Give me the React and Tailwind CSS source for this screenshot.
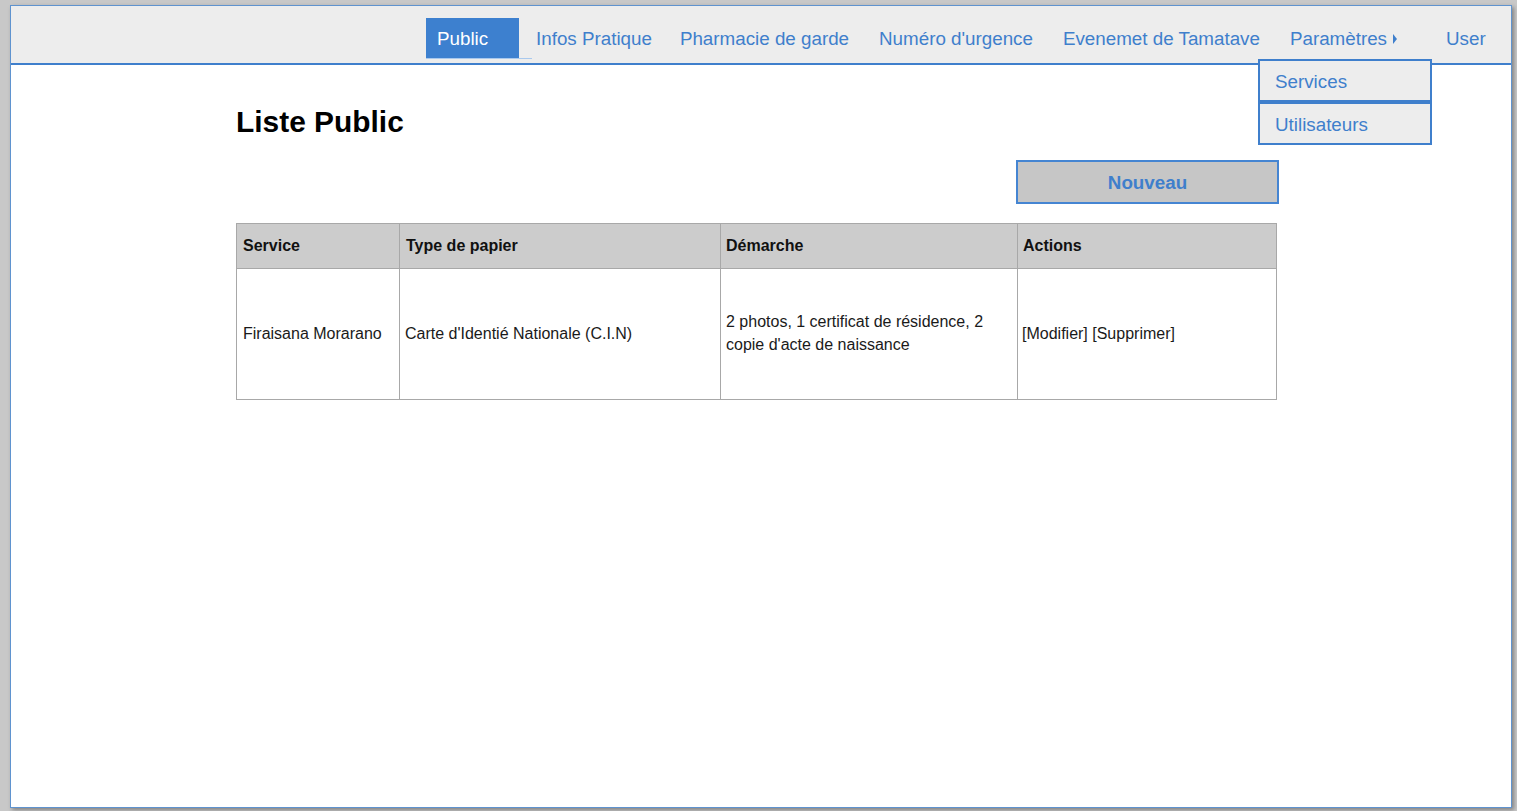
import React from "react";

const navFont = { fontFamily: '"Liberation Sans", Arial, sans-serif' };

export default function App() {
  return (
    <div className="w-[1517px] h-[811px] bg-[#c8c8c8] pt-[5px] pl-[10px] overflow-hidden" style={navFont}>
      <div className="relative w-[1502px] h-[803px] bg-white border border-[#5f93cf] shadow-[2px_2px_4px_rgba(0,0,0,0.35)]">
        {/* Navbar */}
        <div className="h-[59px] bg-[#ededed] border-b-2 border-[#3f7fcc] flex items-start pl-[415px] text-[18.8px] text-[#3f7fcc]">
          <div className="mt-[12px] w-[106px] h-[41px] border-b border-[#a9c9ee]">
            <div className="w-[93px] h-[40px] bg-[#3d80cf] text-white flex items-center pl-[11px] pt-[3px]">Public</div>
          </div>
          <div className="ml-[4px] mt-[12px] h-[40px] flex items-center pt-[3px]">Infos Pratique</div>
          <div className="ml-[28px] mt-[12px] h-[40px] flex items-center pt-[3px]">Pharmacie de garde</div>
          <div className="ml-[30px] mt-[12px] h-[40px] flex items-center pt-[3px]">Numéro d'urgence</div>
          <div className="ml-[30px] mt-[12px] h-[40px] flex items-center pt-[3px]">Evenemet de Tamatave</div>
          <div className="ml-[30px] mt-[12px] h-[40px] flex items-center pt-[3px]">
            Paramètres
            <svg width="4" height="10" viewBox="0 0 4 10" className="ml-[6px] -mt-[2px]">
              <polygon points="0,0 4,5 0,10" fill="#3f7fcc" />
            </svg>
          </div>
          <div className="ml-[49px] mt-[12px] h-[40px] flex items-center pt-[3px]">User</div>
        </div>

        {/* Dropdown */}
        <div className="absolute left-[1247px] top-[53px] w-[174px] text-[18.8px] text-[#3f7fcc]">
          <div className="h-[43px] bg-[#ededed] border-2 border-[#3f7fcc] flex items-center pl-[15px] pt-[3px]">Services</div>
          <div className="h-[43px] bg-[#ededed] border-2 border-[#3f7fcc] flex items-center pl-[15px] pt-[3px]">Utilisateurs</div>
        </div>

        {/* Content */}
        <div className="ml-[225px] w-[1043px]">
          <h1 className="mt-[39px] h-[36px] leading-[36px] text-[29.9px] font-bold text-black">Liste Public</h1>
          <div className="mt-[20px] flex justify-end">
            <button className="w-[263px] h-[44px] bg-[#c6c6c6] border-2 border-[#4585d2] text-[#3f7fcc] font-bold text-[18.8px] pt-[3px]">
              Nouveau
            </button>
          </div>
          <table className="mt-[19px] w-[1040px] border-collapse text-[16px] text-[#1a1a1a] table-fixed">
            <colgroup>
              <col className="w-[163px]" />
              <col className="w-[321px]" />
              <col className="w-[297px]" />
              <col className="w-[259px]" />
            </colgroup>
            <thead>
              <tr className="h-[45px] bg-[#cccccc]">
                <th className="border border-[#a8a8a8] text-left font-bold pl-[6px] text-[#111]">Service</th>
                <th className="border border-[#a8a8a8] text-left font-bold pl-[6px] text-[#111]">Type de papier</th>
                <th className="border border-[#a8a8a8] text-left font-bold pl-[5px] text-[#111]">Démarche</th>
                <th className="border border-[#a8a8a8] text-left font-bold pl-[5px] text-[#111]">Actions</th>
              </tr>
            </thead>
            <tbody>
              <tr className="h-[131px]">
                <td className="border border-[#a8a8a8] pl-[6px] align-middle">Firaisana Morarano</td>
                <td className="border border-[#a8a8a8] pl-[5px] align-middle">Carte d'Identié Nationale (C.I.N)</td>
                <td className="border border-[#a8a8a8] pl-[5px] pr-[20px] align-middle leading-[23px] pb-[2px]">
                  2 photos, 1 certificat de résidence, 2 copie d'acte de naissance
                </td>
                <td className="border border-[#a8a8a8] pl-[4px] align-middle">[Modifier] [Supprimer]</td>
              </tr>
            </tbody>
          </table>
        </div>
      </div>
    </div>
  );
}
